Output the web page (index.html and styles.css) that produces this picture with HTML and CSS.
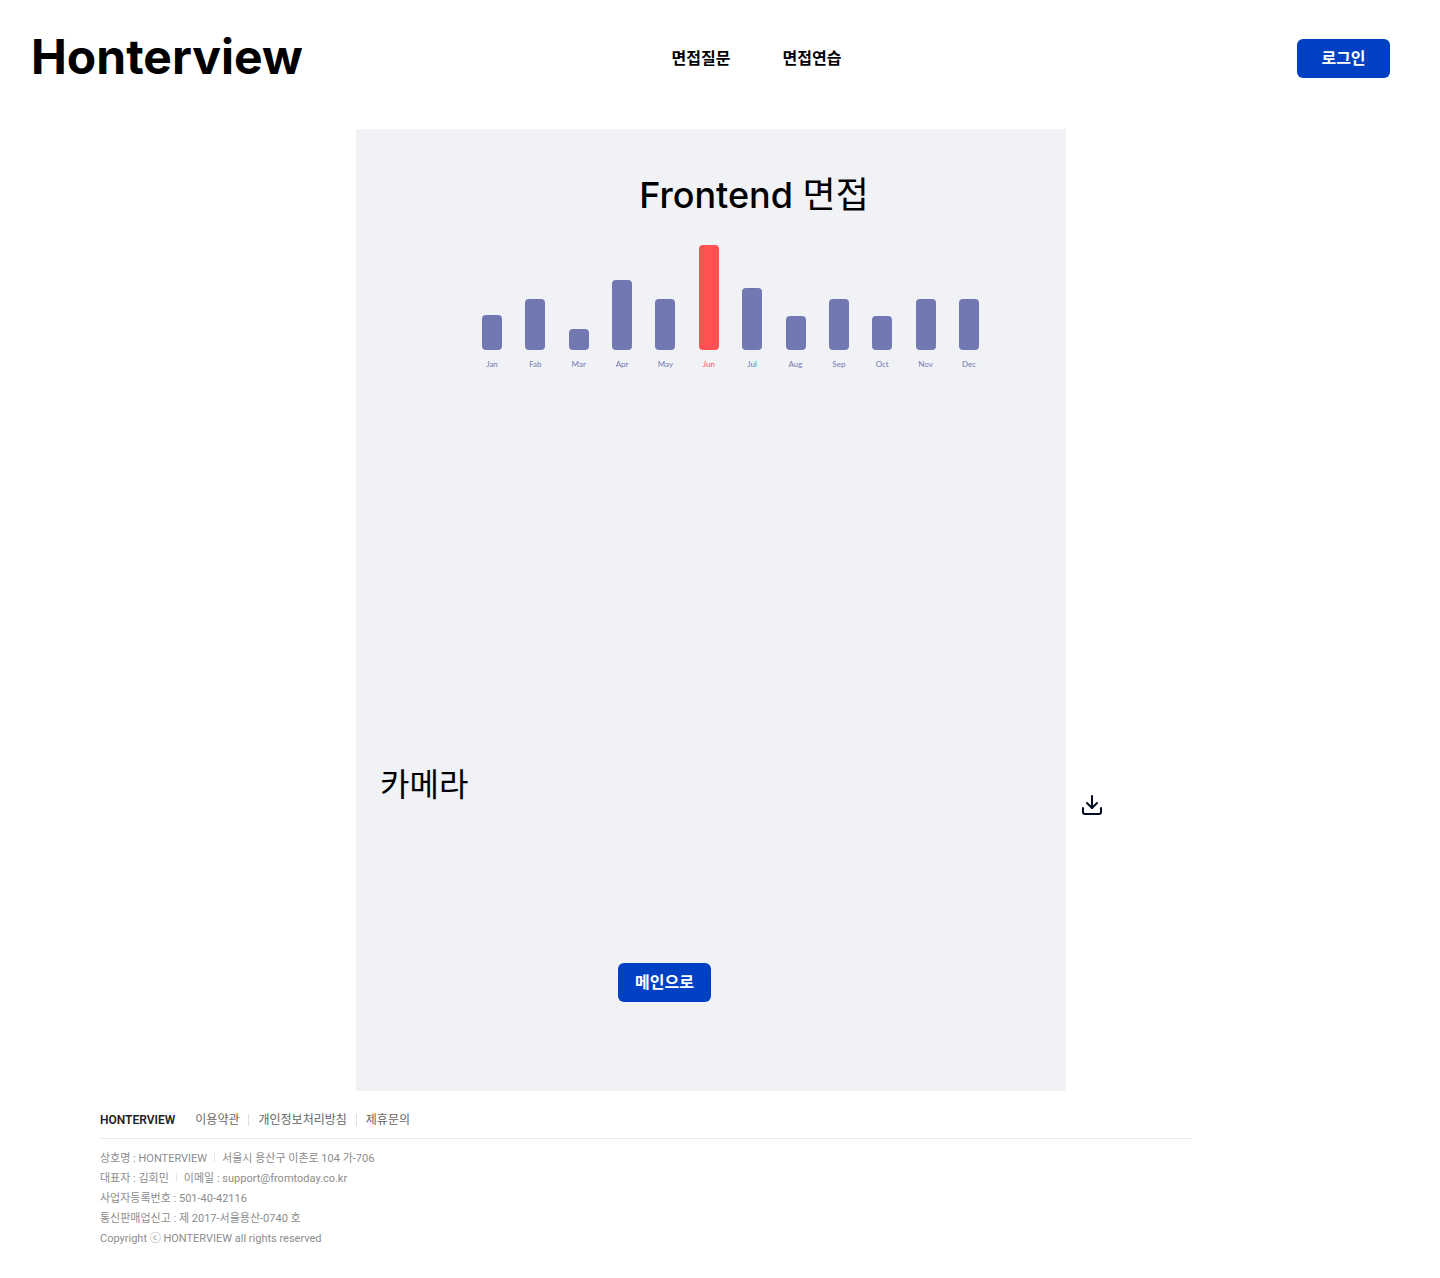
FILE: index.html
```html
<!DOCTYPE html>
<html lang="ko">
<head>
<meta charset="utf-8">
<meta name="viewport" content="width=device-width, initial-scale=1">
<title>Honterview</title>
<link rel="stylesheet" href="styles.css">
</head>
<body>
<header class="header">
  <a class="logo" href="#">Honterview</a>
  <nav class="nav">
    <a href="#">면접질문</a>
    <a href="#">면접연습</a>
  </nav>
  <button class="button login" type="button">로그인</button>
</header>

<main class="main">
  <section class="card">
    <h1 class="title">Frontend <span class="title-kind">면접</span></h1>
    <ul class="chart">
      <li class="month"><span class="bar" style="height:35px"></span>Jan</li>
      <li class="month"><span class="bar" style="height:51px"></span>Fab</li>
      <li class="month"><span class="bar" style="height:21px"></span>Mar</li>
      <li class="month"><span class="bar" style="height:70px"></span>Apr</li>
      <li class="month"><span class="bar" style="height:51px"></span>May</li>
      <li class="month active"><span class="bar" style="height:105px"></span>Jun</li>
      <li class="month"><span class="bar" style="height:62px"></span>Jul</li>
      <li class="month"><span class="bar" style="height:34px"></span>Aug</li>
      <li class="month"><span class="bar" style="height:51px"></span>Sep</li>
      <li class="month"><span class="bar" style="height:34px"></span>Oct</li>
      <li class="month"><span class="bar" style="height:51px"></span>Nov</li>
      <li class="month"><span class="bar" style="height:51px"></span>Dec</li>
    </ul>
    <h2 class="camera">카메라</h2>
    <button class="button home" type="button">메인으로</button>
  </section>
  <button class="download" type="button" aria-label="다운로드">
    <svg width="24" height="24" viewBox="0 0 24 24" fill="none" stroke="#020b24" stroke-width="2" stroke-linecap="round" stroke-linejoin="round"><path d="M21 15v4a2 2 0 0 1-2 2H5a2 2 0 0 1-2-2v-4"/><path d="M7 10l5 5 5-5"/><path d="M12 15V3"/></svg>
  </button>
</main>

<footer class="footer">
  <div class="links">
    <strong class="brand">HONTERVIEW</strong>
    <a href="#">이용약관</a>
    <a href="#">개인정보처리방침</a>
    <a href="#">제휴문의</a>
  </div>
  <address class="info">
    <p><span>상호명 : HONTERVIEW</span><span>서울시 용산구 이촌로 104 가-706</span></p>
    <p><span>대표자 : 김회민</span><span>이메일 : support@fromtoday.co.kr</span></p>
    <p>사업자등록번호 : 501-40-42116</p>
    <p>통신판매업신고 : 제 2017-서울용산-0740 호</p>
    <p>Copyright ⓒ HONTERVIEW all rights reserved</p>
  </address>
</footer>
</body>
</html>
```
FILE: styles.css
```css
* {
  box-sizing: border-box;
}

body {
  margin: 0;
  background: #fff;
  color: #000;
  font-family: Inter, "Noto Sans CJK KR", sans-serif;
}

a {
  color: inherit;
  text-decoration: none;
}

.header {
  display: grid;
  grid-template-columns: 1fr auto 1fr;
  align-items: center;
  padding: 28px 50px 0 31px;
}

.logo {
  padding-bottom: 2px;
  font-size: 48px;
  font-weight: 700;
  line-height: 58px;
}

.nav {
  display: flex;
  gap: 52px;
  margin-left: 92px;
  font-size: 16px;
  font-weight: 700;
  line-height: 24px;
}

.button {
  width: 93px;
  height: 39px;
  padding: 0 0 1px;
  border: 0;
  border-radius: 6px;
  background: #0041c4;
  color: #fff;
  font: 700 16px/24px Inter, "Noto Sans CJK KR", sans-serif;
}

.login {
  justify-self: end;
}

.main {
  display: grid;
  grid-template-columns: 1fr minmax(0, 710px) 1fr;
  padding: 41px 18px 0 0;
}

.card {
  grid-column: 2;
  display: flex;
  flex-direction: column;
  padding: 42px 25px 89px 24px;
  background: #f0f2f6;
}

.title {
  margin: 0;
  padding-left: 87px;
  font-size: 36px;
  font-weight: 500;
  line-height: 48px;
  text-align: center;
}

.title-kind {
  font-weight: 400;
}

.chart {
  display: flex;
  justify-content: space-between;
  align-items: flex-end;
  margin: 26px 62px 0 102px;
  padding: 0;
  list-style: none;
  color: #7278b1;
  font: 8px/12px Lato, sans-serif;
}

.month {
  display: flex;
  flex-direction: column;
  align-items: center;
  gap: 8px;
  width: 20px;
}

.bar {
  width: 20px;
  border-radius: 4px;
  background: #7278b1;
}

.active {
  color: #ff5152;
}

.active .bar {
  background: #ff5152;
}

.camera {
  margin: 391px 0 0;
  font-size: 32px;
  font-weight: 400;
  line-height: 48px;
}

.home {
  margin: 154px 0 0 238px;
}

.download {
  align-self: end;
  justify-self: start;
  width: 24px;
  height: 24px;
  margin: 0 0 274px 14px;
  padding: 0;
  border: 0;
  background: none;
}

.download svg {
  display: block;
}

.footer {
  max-width: 1192px;
  padding: 19px 0 30px 100px;
  font-family: Roboto, "Noto Sans CJK KR", sans-serif;
}

.links {
  display: flex;
  align-items: center;
  padding-bottom: 8px;
  border-bottom: 1px solid #ebebeb;
  color: #666;
  font-size: 12px;
  line-height: 20px;
}

.brand {
  margin-right: 20px;
  color: #222;
  font-weight: 600;
}

.links a + a::before {
  content: "";
  display: inline-block;
  width: 1px;
  height: 12px;
  margin: 0 9px;
  background: #ddd;
  vertical-align: -2px;
}

.info {
  padding-top: 10px;
  color: #8c8c8c;
  font-size: 11px;
  font-style: normal;
  line-height: 20px;
}

.info p {
  margin: 0;
}

.info span + span::before {
  content: "";
  display: inline-block;
  width: 1px;
  height: 9px;
  margin: 0 7px;
  background: #e5e5e5;
}
```
